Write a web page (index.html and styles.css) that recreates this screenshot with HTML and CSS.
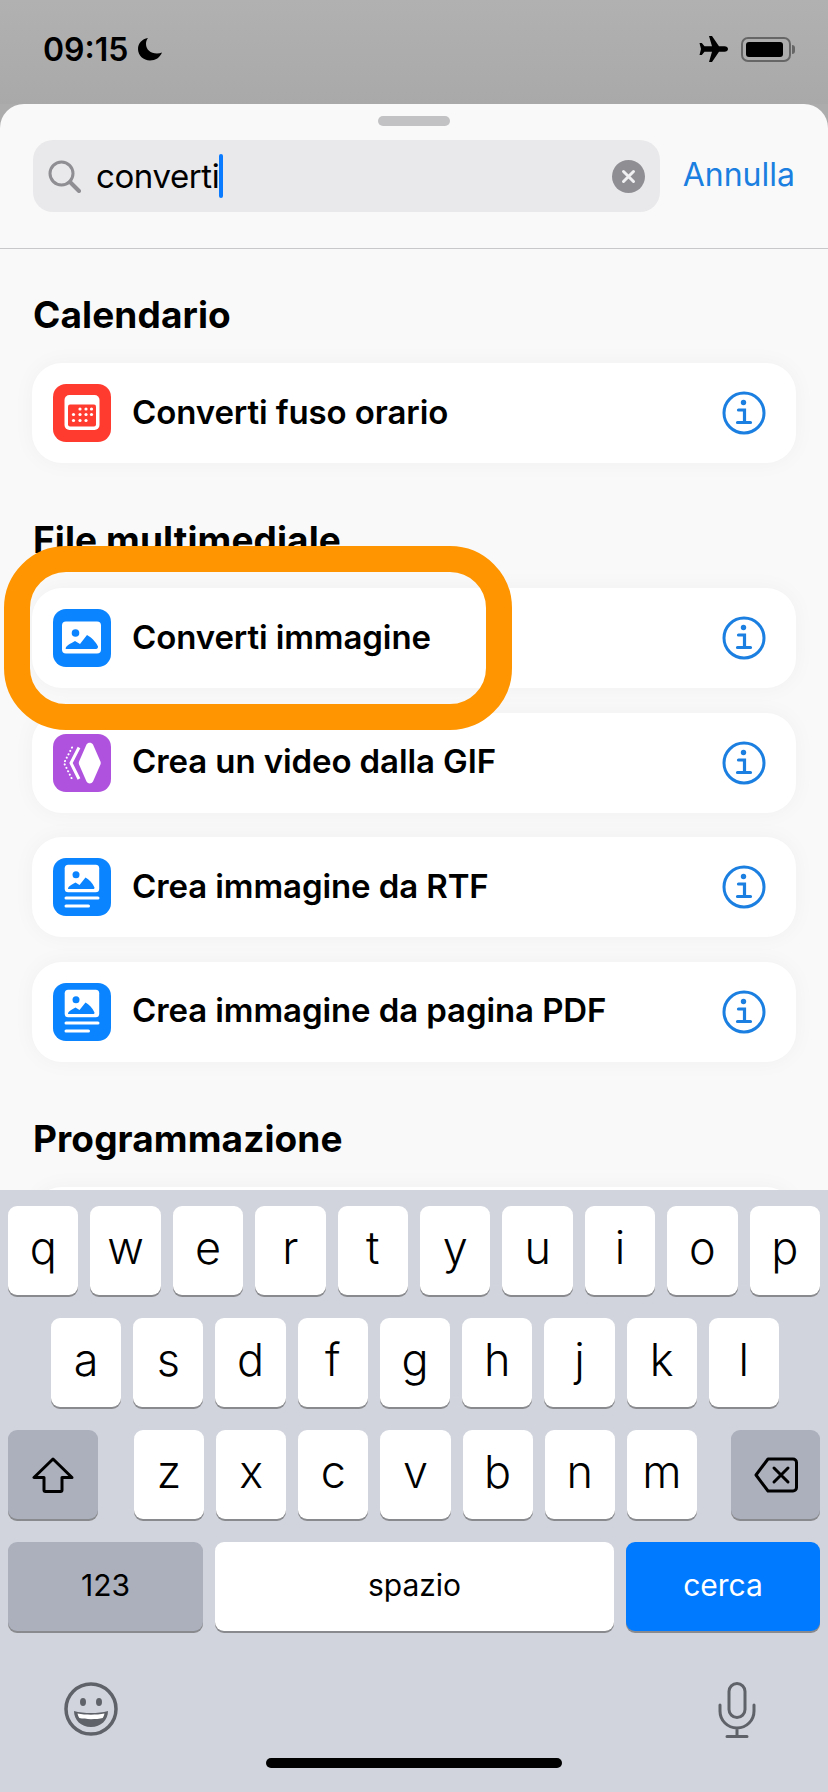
FILE: index.html
```html
<!DOCTYPE html>
<html lang="it">
<head>
  <meta charset="UTF-8">
  <title>Cerca azioni</title>
  <link rel="stylesheet" href="styles.css">
</head>
<body>
  <div id="phone">
    <div id="statusbar">
      <div class="status-left">
        <span class="clock">09:15</span>
        <svg class="moon" viewBox="0 0 26 24"><path d="M11 1C5 2 1 6.500 1 12c0 6.500 5.500 11.500 12 11.500 5.500 0 10-3 12-8-1.500.6-3.200 1-5 1C13.500 16.500 9 12.500 9 7c0-2.200.7-4.300 2-6z" fill="#000"/></svg>
      </div>
      <div class="status-right">
        <svg class="plane" viewBox="0 0 30 26"><path d="M11 0h3l7 10.300h5.500c2 0 3.500 1.200 3.500 2.700s-1.500 2.700-3.500 2.700H21L14 26h-3l3-10.300H6.500L3.800 19H1.500L3 13 1.500 7h2.300l2.700 3.300H14z" fill="#000"/></svg>
        <div class="battery"><div class="battery-fill"></div></div>
        <div class="battery-nub"></div>
      </div>
    </div>

    <div id="sheet">
      <div class="sheet-header">
        <div class="grabber"></div>
        <div class="search-row">
          <div class="search-field">
            <svg class="search-icon" viewBox="0 0 33 33"><circle cx="13.500" cy="13.500" r="11.500" fill="none" stroke="#8e8e93" stroke-width="3"/><path d="M22 22l9 9" stroke="#8e8e93" stroke-width="4" stroke-linecap="round"/></svg>
            <span class="search-text">converti</span>
            <span class="caret"></span>
            <svg class="clear-icon" viewBox="0 0 33 33"><circle cx="16.500" cy="16.500" r="16.500" fill="#8e8e93"/><path d="M11.500 11.500l10 10M21.500 11.500l-10 10" stroke="#f0f0f2" stroke-width="3" stroke-linecap="round"/></svg>
          </div>
          <span class="cancel">Annulla</span>
        </div>
      </div>

      <div class="results">
        <h2 class="section-title">Calendario</h2>
        <div class="rows">
          <div class="row">
            <svg class="app-icon" viewBox="0 0 58 58">
              <rect width="58" height="58" rx="13" fill="#ff3b30"/>
              <rect x="11.500" y="11" width="35" height="35" rx="5" fill="#fff"/>
              <rect x="15" y="20.500" width="28" height="22" rx="2" fill="#ff3b30"/>
              <g fill="#fff">
                <circle cx="27" cy="25" r="1.600"/><circle cx="33" cy="25" r="1.600"/><circle cx="38.500" cy="25" r="1.600"/>
                <circle cx="20.500" cy="30.500" r="1.600"/><circle cx="27" cy="30.500" r="1.600"/><circle cx="33" cy="30.500" r="1.600"/><circle cx="38.500" cy="30.500" r="1.600"/>
                <circle cx="20.500" cy="36.500" r="1.600"/><circle cx="27" cy="36.500" r="1.600"/><circle cx="33" cy="36.500" r="1.600"/>
              </g>
            </svg>
            <span class="row-label">Converti fuso orario</span>
            <svg class="info-icon" viewBox="0 0 44 44"><use href="#info"/></svg>
          </div>
        </div>

        <h2 class="section-title">File multimediale</h2>
        <div class="rows">
          <div class="row">
            <svg class="app-icon" viewBox="0 0 58 58">
              <rect width="58" height="58" rx="13" fill="#0a84ff"/>
              <rect x="9" y="12.500" width="39" height="32" rx="4" fill="#fff"/>
              <circle cx="22.500" cy="24" r="3.800" fill="#0a84ff"/>
              <path d="M12.500 40c0-3 5-5.500 9.500-8l5 3 7-9c4 2 9 7 11 11.500 0 1.500-.6 2.500-2 2.500H14c-1 0-1.500-.500-1.500-.500z" fill="#0a84ff"/>
            </svg>
            <span class="row-label">Converti immagine</span>
            <svg class="info-icon" viewBox="0 0 44 44"><use href="#info"/></svg>
          </div>
          <div class="row">
            <svg class="app-icon" viewBox="0 0 58 58">
              <rect width="58" height="58" rx="13" fill="#af52de"/>
              <path d="M33.500 10.500c1.500-2.500 5-2.500 6.500 0L47 26.500c1 1.700 1 3.300 0 5L40 47.500c-1.500 2.500-5 2.500-6.500 0L26.500 31.500c-1-1.700-1-3.300 0-5z" fill="#fff"/>
              <path d="M26 13.500L18 29l8 16" fill="none" stroke="#fff" stroke-width="3"/>
              <path d="M19 13.500L11 29l8 16" fill="none" stroke="#fff" stroke-width="2" stroke-linecap="round" stroke-dasharray="0.100 3.700"/>
            </svg>
            <span class="row-label">Crea un video dalla GIF</span>
            <svg class="info-icon" viewBox="0 0 44 44"><use href="#info"/></svg>
          </div>
          <div class="row">
            <svg class="app-icon" viewBox="0 0 58 58"><use href="#doc-image"/></svg>
            <span class="row-label">Crea immagine da RTF</span>
            <svg class="info-icon" viewBox="0 0 44 44"><use href="#info"/></svg>
          </div>
          <div class="row">
            <svg class="app-icon" viewBox="0 0 58 58"><use href="#doc-image"/></svg>
            <span class="row-label">Crea immagine da pagina PDF</span>
            <svg class="info-icon" viewBox="0 0 44 44"><use href="#info"/></svg>
          </div>
        </div>

        <h2 class="section-title">Programmazione</h2>
        <div class="rows">
          <div class="row"></div>
        </div>
      </div>
    </div>

    <div id="keyboard">
      <div class="key-row">
        <div class="key">q</div><div class="key">w</div><div class="key">e</div><div class="key">r</div><div class="key">t</div><div class="key">y</div><div class="key">u</div><div class="key">i</div><div class="key">o</div><div class="key">p</div>
      </div>
      <div class="key-row home-row">
        <div class="key">a</div><div class="key">s</div><div class="key">d</div><div class="key">f</div><div class="key">g</div><div class="key">h</div><div class="key">j</div><div class="key">k</div><div class="key">l</div>
      </div>
      <div class="key-row">
        <div class="key key-dark key-shift">
          <svg width="42" height="36" viewBox="0 0 42 36"><path d="M21 2L2 20.500h10V33a1.500 1.500 0 0 0 1.500 1.500h15A1.500 1.500 0 0 0 30 33V20.500h10z" fill="none" stroke="#000" stroke-width="3" stroke-linejoin="round"/></svg>
        </div>
        <div class="letters">
          <div class="key">z</div><div class="key">x</div><div class="key">c</div><div class="key">v</div><div class="key">b</div><div class="key">n</div><div class="key">m</div>
        </div>
        <div class="key key-dark key-delete">
          <svg width="44" height="36" viewBox="0 0 44 36"><path d="M14 2h25a3.500 3.500 0 0 1 3.500 3.500v25A3.500 3.500 0 0 1 39 34H14L2 18z" fill="none" stroke="#000" stroke-width="3" stroke-linejoin="round"/><path d="M20 11l14 14M34 11L20 25" stroke="#000" stroke-width="3" stroke-linecap="round"/></svg>
        </div>
      </div>
      <div class="key-row">
        <div class="key key-dark key-small key-numbers">123</div>
        <div class="key key-small key-space">spazio</div>
        <div class="key key-small key-search">cerca</div>
      </div>
      <div class="keyboard-bottom">
        <svg class="emoji-icon" viewBox="0 0 54 54">
          <circle cx="27" cy="27" r="25" fill="none" stroke="#5f6269" stroke-width="3.500"/>
          <ellipse cx="19" cy="20" rx="3" ry="4" fill="#5f6269"/>
          <ellipse cx="35" cy="20" rx="3" ry="4" fill="#5f6269"/>
          <path d="M10 29c5 1.500 11 2 17 2s12-.500 17-2c0 9-7 16-17 16S10 38 10 29z" fill="#5f6269"/>
          <path d="M13.500 31.500c4 .800 9 1.200 13.500 1.200s9.500-.400 13.500-1.200c-.4 1.800-1 3.400-1.800 4.500-3 .800-7.500 1.200-11.700 1.200s-8.700-.400-11.700-1.200c-.800-1.100-1.400-2.700-1.800-4.500z" fill="#fff"/>
        </svg>
        <svg class="mic-icon" viewBox="0 0 38 56">
          <rect x="11" y="1.500" width="16" height="34" rx="8" fill="none" stroke="#5f6269" stroke-width="3"/>
          <path d="M2 23v6c0 9.500 7.500 17 17 17s17-7.500 17-17v-6M19 46v8M9 54.500h20" fill="none" stroke="#5f6269" stroke-width="3" stroke-linecap="round"/>
        </svg>
      </div>
      <div class="home-indicator"></div>
    </div>

    <div class="highlight-ring"></div>
  </div>

  <svg class="icon-defs" width="0" height="0">
    <defs>
      <g id="info">
        <circle cx="22" cy="22" r="20" fill="none" stroke="#1a7fe0" stroke-width="3"/>
        <circle cx="21.500" cy="11.500" r="2.700" fill="#1a7fe0"/>
        <path d="M16.500 19h6v12.500M15.500 31.500h13" fill="none" stroke="#1a7fe0" stroke-width="3.200" stroke-linecap="round"/>
      </g>
      <g id="doc-image">
        <rect width="58" height="58" rx="13" fill="#0a84ff"/>
        <rect x="11.700" y="6.700" width="34.500" height="27.500" rx="3.500" fill="#fff"/>
        <circle cx="23" cy="16.700" r="3.500" fill="#0a84ff"/>
        <path d="M15 31c0-3 4-4.500 7.500-6.500l4 2.500 6-7.500c3.500 2 7 5.500 9 10 0 1-.500 1.500-1.500 1.500z" fill="#0a84ff"/>
        <path d="M13 40h32M13 48h22.500" stroke="#fff" stroke-width="3" stroke-linecap="round"/>
      </g>
    </defs>
  </svg>
</body>
</html>
```

FILE: styles.css
```css
* {
  box-sizing: border-box;
}

body {
  margin: 0;
  font-family: Inter, "Liberation Sans", sans-serif;
  color: #000;
  overflow: hidden;
}

.icon-defs {
  position: absolute;
}

#phone {
  position: relative;
  display: flex;
  flex-direction: column;
  width: 828px;
  height: 1792px;
  background-color: #acacad;
  overflow: hidden;
}

/* Status bar */
#statusbar {
  display: flex;
  justify-content: space-between;
  align-items: center;
  height: 104px;
  padding: 0 33px 6px 43px;
  flex-shrink: 0;
  background: linear-gradient(#b1b1b2, #a9a9aa);
}

.status-left {
  display: flex;
  align-items: center;
  gap: 9px;
}

.clock {
  font-size: 32px;
  font-weight: 600;
}

.moon {
  width: 26px;
  height: 24px;
}

.status-right {
  display: flex;
  align-items: center;
}

.plane {
  width: 30px;
  height: 26px;
  margin-right: 13px;
}

.battery {
  width: 50px;
  height: 25px;
  padding: 3px;
  border: 2px solid #666;
  border-radius: 7px;
}

.battery-fill {
  width: 37px;
  height: 100%;
  background-color: #000;
  border-radius: 3px;
}

.battery-nub {
  width: 3px;
  height: 9px;
  margin-left: 1px;
  background-color: #666;
  border-radius: 0 3px 3px 0;
}

/* Sheet */
#sheet {
  display: flex;
  flex-direction: column;
  flex: 1;
  min-height: 0;
  background-color: #f9f9f9;
  border-radius: 24px 24px 0 0;
  overflow: hidden;
}

.sheet-header {
  height: 145px;
  flex-shrink: 0;
  padding-top: 12px;
  border-bottom: 1px solid #c8c8ca;
}

.grabber {
  width: 72px;
  height: 10px;
  margin: 0 auto 14px;
  background-color: #c2c2c4;
  border-radius: 5px;
}

.search-row {
  display: flex;
  align-items: center;
  padding: 0 33px 0 33px;
}

.search-field {
  display: flex;
  align-items: center;
  width: 627px;
  height: 72px;
  padding: 0 15px;
  background-color: #e9e9eb;
  border-radius: 20px;
}

.search-icon {
  width: 33px;
  height: 33px;
  margin-right: 15px;
}

.search-text {
  font-size: 33px;
  letter-spacing: -0.4px;
}

.caret {
  width: 4px;
  height: 44px;
  background-color: #0a7aff;
  border-radius: 2px;
}

.clear-icon {
  width: 33px;
  height: 33px;
  margin-left: auto;
}

.cancel {
  margin-left: auto;
  padding-bottom: 4px;
  font-size: 32px;
  color: #1a7fe0;
}

.results {
  flex: 1;
  min-height: 0;
  padding: 44px 32px 0;
  overflow: hidden;
}

.section-title {
  margin: 0 0 26px 1px;
  font-size: 37px;
  line-height: 44px;
  font-weight: 700;
  letter-spacing: 0.1px;
}

.rows {
  display: flex;
  flex-direction: column;
  gap: 24.6px;
  margin-bottom: 55px;
}

.row {
  display: flex;
  align-items: center;
  gap: 21px;
  height: 100px;
  padding: 0 30px 0 21px;
  background-color: #fff;
  border-radius: 30px;
  box-shadow: 0 0 22px rgba(0, 0, 0, 0.04);
  flex-shrink: 0;
}

.app-icon {
  width: 58px;
  height: 58px;
  flex-shrink: 0;
}

.row-label {
  flex: 1;
  padding-bottom: 3px;
  font-size: 33px;
  font-weight: 600;
  letter-spacing: -0.1px;
}

.info-icon {
  width: 44px;
  height: 44px;
  flex-shrink: 0;
}

/* Orange marker drawn over the screenshot */
.highlight-ring {
  position: absolute;
  left: 4px;
  top: 546px;
  width: 508px;
  height: 184px;
  border: 26px solid #ff9500;
  border-radius: 62px;
}

/* Keyboard */
#keyboard {
  display: flex;
  flex-direction: column;
  gap: 23px;
  height: 602px;
  flex-shrink: 0;
  padding-top: 16px;
  background-color: #d1d4dc;
}

.key-row {
  display: flex;
  gap: 12px;
  padding: 0 8px;
}

.home-row {
  padding: 0 49px 0 51px;
}

.letters {
  display: flex;
  flex: 1;
  gap: 12px;
  margin: 0 22px 0 24px;
}

.key {
  display: flex;
  align-items: center;
  justify-content: center;
  flex: 1;
  height: 89px;
  padding-bottom: 7px;
  font-size: 45px;
  font-weight: 300;
  background-color: #fff;
  border-radius: 9px;
  box-shadow: 0 2px 0 #898a8e;
}

.key-dark {
  background-color: #abb0bc;
}

.key-shift {
  flex: 0 0 90px;
  padding-bottom: 0;
}

.key-delete {
  flex: 0 0 89px;
  padding-bottom: 0;
}

.key-small {
  padding-bottom: 4px;
  font-size: 30px;
  font-weight: 400;
}

.key-numbers {
  flex: 0 0 195px;
}

.key-search {
  flex: 0 0 194px;
  color: #fff;
  background-color: #007aff;
}

.keyboard-bottom {
  display: flex;
  justify-content: space-between;
  align-items: flex-start;
  padding: 28px 72px 0 64px;
}

.emoji-icon {
  width: 54px;
  height: 54px;
}

.mic-icon {
  width: 38px;
  height: 56px;
}

.home-indicator {
  width: 296px;
  height: 10px;
  margin: -3px auto 0;
  background-color: #000;
  border-radius: 5px;
}
```
